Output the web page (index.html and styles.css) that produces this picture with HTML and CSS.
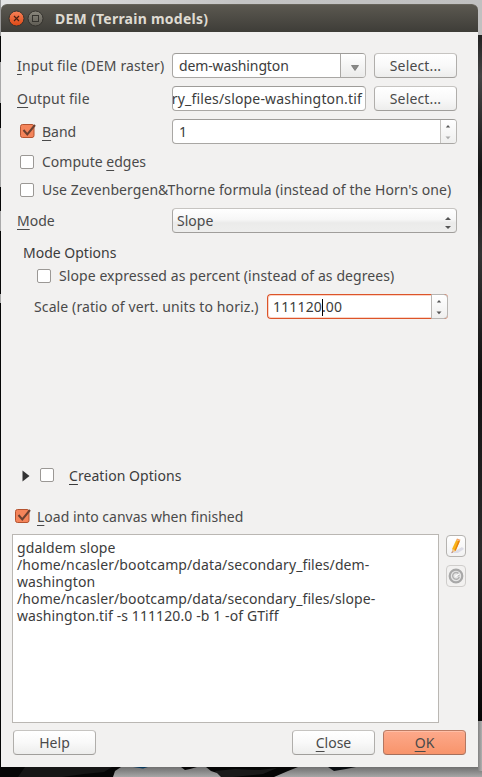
FILE: index.html
```html
<!DOCTYPE html>
<html lang="en">
<head>
<meta charset="utf-8">
<title>DEM (Terrain models)</title>
<link rel="stylesheet" href="styles.css">
</head>
<body>
<svg class="backdrop" width="482" height="777" viewBox="0 0 482 777" aria-hidden="true">
  <defs>
    <linearGradient id="sky" x1="0" x2="1" y1="0" y2="0"><stop offset="0" stop-color="#e4e4e4"/><stop offset=".5" stop-color="#c4c4c4"/><stop offset="1" stop-color="#c0c0c0"/></linearGradient>
    <linearGradient id="shore" gradientUnits="userSpaceOnUse" x1="0" x2="0" y1="767" y2="777"><stop offset="0" stop-color="#707070"/><stop offset="1" stop-color="#a6a6a6"/></linearGradient>
    <linearGradient id="edge" x1="0" x2="1" y1="0" y2="0"><stop offset="0" stop-color="#828282"/><stop offset="1" stop-color="#b0b0b0"/></linearGradient>
    <linearGradient id="strip" x1="0" x2="0" y1="0" y2="1"><stop offset="0" stop-color="#222"/><stop offset=".06" stop-color="#444"/><stop offset=".2" stop-color="#151515"/><stop offset=".32" stop-color="#333"/><stop offset=".5" stop-color="#111"/><stop offset=".75" stop-color="#2b2b2b"/><stop offset="1" stop-color="#050505"/></linearGradient>
  </defs>
  <rect width="482" height="777" fill="#060606"/>
  <rect width="482" height="35" fill="url(#sky)"/>
  <rect width="1" height="36" fill="#999"/>
  <path d="M0 62h1v41H0zM0 128h1v59H0zM0 211h1v20H0zM0 294h1v9H0z" fill="#a9a9a9"/>
  <rect x="478" y="35" width="4" height="686" fill="url(#strip)"/>
  <path d="M274 777l14-6 10-4h184v10z" fill="url(#shore)"/>
  <path d="M478 721h4v50h-4z" fill="url(#edge)"/>
  <path d="M328 767h28l-10 2-12 2z" fill="#0a0d10"/>
  <path d="M25 767h87l-8 5-20 2-22 3H18z" fill="#161616"/>
  <path d="M215 771l20-2 24 1 18-2-14 6-30 3h-12z" fill="#1a1a1a"/>
  <path d="M113 777l2-6 6-4h60l4 3 5-1 7-2h9l5 4 6 2 4 4z" fill="url(#shore)"/>
  <path d="M133 767h15l-5 1.500z" fill="#07375c"/>
</svg>

<main class="window">
  <header class="titlebar">
    <svg class="window-buttons" width="46" height="20" viewBox="0 0 46 20">
      <defs>
        <linearGradient id="closeFill" x1="0" x2="0" y1="0" y2="1"><stop offset="0" stop-color="#f78259"/><stop offset="1" stop-color="#dd4815"/></linearGradient>
        <linearGradient id="maxFill" x1="0" x2="0" y1="0" y2="1"><stop offset="0" stop-color="#8b887e"/><stop offset="1" stop-color="#5e5b53"/></linearGradient>
      </defs>
      <circle cx="15.500" cy="9.500" r="7.500" fill="url(#closeFill)" stroke="#34322d"/>
      <path d="M13 7l5 5M18 7l-5 5" stroke="#4a2012" stroke-width="1.200"/>
      <circle cx="34.500" cy="9.500" r="7.500" fill="url(#maxFill)" stroke="#34322d"/>
      <rect x="31.500" y="6.500" width="6" height="6" fill="none" stroke="#35332e"/>
    </svg>
    <h1 class="title">DEM (Terrain models)</h1>
  </header>

  <form class="content">
    <section class="fields">
      <div class="row">
        <label class="label t-input"><u>I</u>nput file (DEM raster)</label>
        <div class="combo">
          <span class="combo-text t-dem">dem-washington</span>
          <span class="combo-arrow"><svg width="8" height="6" viewBox="0 0 8 6"><path d="M.5.5h7L4 5.500z" fill="#8a8a88" stroke="#6a6a68" stroke-width=".7"/></svg></span>
        </div>
        <button type="button" class="button t-select">Select...</button>
      </div>
      <div class="row">
        <label class="label t-output"><u>O</u>utput file</label>
        <div class="entry clipped"><span class="t-path">ry_files/slope-washington.tif</span></div>
        <button type="button" class="button t-select">Select...</button>
      </div>
      <div class="row">
        <label class="label check-label"><svg class="checked" width="17" height="16" viewBox="0 0 17 16"><rect x=".5" y="1.500" width="13.500" height="13" rx="2" fill="#f4845a" stroke="#b4532f"/><path d="M3.500 7l3.800 4.500L15 2" fill="none" stroke="#6b4030" stroke-width="2"/></svg><span class="t-band"><u>B</u>and</span></label>
        <div class="spin">
          <span class="spin-text">1</span>
          <span class="stepper"><svg width="16" height="23" viewBox="0 0 16 23"><path d="M5.800 7.500h4.400L8 5z" fill="#555"/><path d="M5.500 16.500h5L8 19.300z" fill="#aaa"/></svg></span>
        </div>
      </div>
    </section>

    <div class="check-row"><span class="box"></span><span class="t-edges">Compute <u>e</u>dges</span></div>
    <div class="check-row"><span class="box"></span><span class="t-zev">Use Zevenbergen&amp;Thorne formula (instead of the Horn's one)</span></div>

    <div class="row mode-row">
      <label class="label t-mode"><u>M</u>ode</label>
      <div class="select"><span class="t-slope">Slope</span><svg width="8" height="14" viewBox="0 0 8 14"><path d="M1 4h6L4 1z" fill="#555"/><path d="M1 10h6L4 13z" fill="#555"/></svg></div>
    </div>

    <section class="mode-options">
      <h2 class="group-title t-modeopt">Mode Options</h2>
      <div class="option-row"><span class="box"></span><span class="t-percent">Slope expressed as percent (instead of as degrees)</span></div>
      <div class="scale-row">
        <label class="t-scale">Scale (ratio of vert. units to horiz.)</label>
        <div class="spin focused">
          <span class="spin-text t-num">111120<i class="caret"></i>.00</span>
          <span class="stepper"><svg width="16" height="23" viewBox="0 0 16 23"><path d="M5.800 7.500h4.400L8 5z" fill="#555"/><path d="M5.500 16.500h5L8 19.300z" fill="#555"/></svg></span>
        </div>
      </div>
    </section>

    <div class="creation-row">
      <svg width="8" height="12" viewBox="0 0 8 12"><path d="M.5.5L7.500 6 .5 11.500z" fill="#333"/></svg>
      <span class="box"></span>
      <h2 class="group-title t-creation"><u>C</u>reation Options</h2>
    </div>

    <div class="load-row"><svg class="checked" width="17" height="16" viewBox="0 0 17 16"><rect x=".5" y="1.500" width="13.500" height="13" rx="2" fill="#f4845a" stroke="#b4532f"/><path d="M3.500 7l3.800 4.500L15 2" fill="none" stroke="#6b4030" stroke-width="2"/></svg><span class="t-load"><u>L</u>oad into canvas when finished</span></div>

    <section class="command">
      <div class="command-text">gdaldem slope<br>/home/ncasler/bootcamp/data/secondary_files/dem-<br>washington<br>/home/ncasler/bootcamp/data/secondary_files/slope-<br>washington.tif -s 111120.0 -b 1 -of GTiff</div>
      <div class="tools">
        <span class="tool">
          <svg width="18" height="20" viewBox="0 0 18 20"><path d="M5 17l10-6 2 2-6 4z" fill="#dcdce6"/><path d="M9.200 4l3.600 1.300-4 9.200-3.300 1.800-.3-3.500z" fill="#f8b418"/><path d="M11.300 4.800l1.500.5-4 9.200-1.500.8z" fill="#e87f0c"/><path d="M9.200 4l.8-1.500 3.500 1.200-.7 1.600z" fill="#f0a062"/><path d="M5.200 12.800l2.800 1.600-3.200 2.600z" fill="#ecc9a0"/><path d="M5 15.400l1 .6-1.600 1.300z" fill="#84404a"/></svg>
        </span>
        <span class="tool disabled">
          <svg width="18" height="20" viewBox="0 0 18 20"><circle cx="9" cy="10" r="6.300" fill="#e6e6e6" stroke="#a8a8a8" stroke-width="2.200"/><path d="M12.500 9.500H9.800M11.500 7.500A3.400 3.400 0 1 0 12.300 11" fill="none" stroke="#b0b0b0" stroke-width="1.400"/><path d="M8.300 10.500l3.500-2.300" stroke="#fff" stroke-width="1.300"/></svg>
        </span>
      </div>
    </section>

    <footer class="actions">
      <button type="button" class="button t-help">Help</button>
      <span class="spacer"></span>
      <button type="button" class="button t-close"><u>C</u>lose</button>
      <button type="button" class="button primary t-ok"><u>O</u>K</button>
    </footer>
  </form>
</main>
</body>
</html>
```
FILE: styles.css
```css
* { box-sizing: border-box; }
html, body { margin: 0; height: 777px; overflow: hidden; }
body {
  display: flow-root;
  background: #060606;
  color: #4a4a4a;
  font: 14px/17px "Noto Sans", "Open Sans", sans-serif;
  white-space: nowrap;
}
svg { display: block; flex: none; }
.backdrop { position: absolute; top: 0; left: 0; z-index: -1; }
u { text-decoration: underline; text-decoration-thickness: 1px; text-underline-offset: 3px; text-decoration-skip-ink: none; }

.window { margin: 4px 4px 0 1px; height: 763px; width: 477px; background: #f2f1f0; border-radius: 6px 6px 0 0; display: flow-root; }
.titlebar {
  height: 28px;
  display: flex;
  align-items: center;
  border-radius: 6px 6px 0 0;
  background: linear-gradient(#5b5850, #3e3d38);
  border-top: 1px solid #67645b;
}
.title { margin: 0 0 0 8px; font-size: 14px; line-height: 18px; font-weight: 700; letter-spacing: .25px; color: #dfdbd2; }

.content { display: flex; flex-direction: column; padding: 21px 12px 12px 11px; height: 735px; }
.fields { display: flex; flex-direction: column; gap: 8px; margin-bottom: 3px; }
.row { display: flex; height: 25px; padding: 0 9px 0 5px; }
.label { width: 155px; line-height: 25px; flex: none; }
.check-label { display: flex; align-items: center; gap: 5px; padding-left: 3px; line-height: 23px; }
.check-label svg { margin-top: -1px; }

.combo, .entry, .spin { height: 25px; border: 1px solid; border-color: #9e9c99 #b8b6b3 #a9a7a4 #a9a7a4; border-radius: 4px; background: #fff; color: #3c3c3c; display: flex; }
.combo, .entry { width: 194px; margin-right: 8px; flex: none; }
.combo-text { flex: 1; padding-left: 6px; line-height: 23px; }
.combo-arrow { width: 25px; border-left: 1px solid #aaa8a5; border-radius: 0 3px 3px 0; background: linear-gradient(#fff, #ebebea); display: flex; align-items: center; justify-content: center; padding: 4px 0 0 3px; }
.clipped { overflow: hidden; justify-content: flex-end; padding-right: 3px; line-height: 23px; }
.spin { width: 285px; }
.spin-text { flex: 1; padding-left: 6px; line-height: 23px; }
.stepper { width: 16px; border-left: 1px solid #c4c2bf; background: linear-gradient(#fff, #efefee); border-radius: 0 3px 3px 0; }
.stepper svg { margin-left: -1px; }

.button {
  width: 83px; height: 25px; padding: 0; flex: none;
  font: inherit; line-height: 23px; color: #4a4a4a; text-align: center;
  border: 1px solid; border-color: #c6c4c1 #b0aeab #a09e9b;
  border-radius: 4px;
  background: linear-gradient(#fff, #f9f9f9 50%, #ededec);
}
.primary { background: linear-gradient(#fda98b, #f8946b); border-color: #bd7d65 #b27762 #a5705d; box-shadow: inset 0 1px #ffbea6; }

.box { width: 14px; height: 14px; flex: none; border: 1px solid #9b9895; border-radius: 2px; background: #fff; }
.check-row { display: flex; align-items: center; gap: 8px; height: 28px; padding-left: 8px; }
.check-row .box { margin-top: 1px; }
.mode-row { margin-top: 5px; }
.select { width: 285px; height: 25px; border: 1px solid; border-color: #c6c4c1 #b0aeab #a09e9b #a9a7a4; border-radius: 4px; background: linear-gradient(#fff, #f7f7f7 45%, #ebebea 60%, #eeeeed); display: flex; align-items: center; justify-content: space-between; padding: 0 4px; color: #4a4a4a; }
.select svg { margin-top: 4px; }

.mode-options { margin-top: 10px; height: 222px; padding-left: 11px; }
.group-title { margin: 0; font-size: 14px; line-height: 20px; font-weight: 400; color: #3c3c3c; }
.option-row { display: flex; align-items: center; gap: 8px; height: 24px; padding-left: 14px; }
.option-row .box { margin-top: 1px; }
.scale-row { display: flex; height: 25px; margin-top: 7px; padding-left: 11px; line-height: 25px; }
.scale-row label { width: 233px; }
.scale-row .spin { width: 181px; }
.focused { border-color: #dc5429; border-right-width: 0; box-shadow: inset 0 0 0 1px #fbd3c5; }
.focused .spin-text { padding-left: 5px; }
.focused .stepper { width: 17px; height: 25px; margin: -1px 0; border: 1px solid #b8b6b3; border-radius: 0 4px 4px 0; }
.caret { display: inline-block; width: 1px; height: 17px; margin-right: -1px; vertical-align: -4px; background: #000; }

.creation-row { display: flex; align-items: center; height: 20px; padding-left: 10px; }
.creation-row svg { margin-top: 1px; }
.creation-row .box { margin: 0 15px 0 10px; }
.creation-row .group-title { margin-top: 1px; }
.load-row { display: flex; align-items: center; gap: 5px; height: 20px; margin-top: 21px; padding-left: 3px; }
.command { display: flex; justify-content: space-between; height: 189px; margin-top: 8px; }
.command-text { width: 427px; border: 1px solid #bab7b3; background: #fff; color: #3c3c3c; padding: 4px; letter-spacing: .1px; }
.tools { display: flex; flex-direction: column; gap: 8px; padding-top: 1px; width: 20px; }
.tool { width: 20px; height: 22px; border: 1px solid #b5b3b0; border-radius: 4px; background: linear-gradient(#fff, #f2f2f2); }
.disabled { border-color: #cfcdcb; background: #f2f1f0; }
.actions { display: flex; gap: 8px; margin-top: 7px; padding-left: 1px; }
.spacer { flex: 1; }

.t-input { letter-spacing: .12px; }
.t-output { letter-spacing: .2px; }
.t-dem { letter-spacing: -.12px; }
.t-path { letter-spacing: .17px; }
.t-select { letter-spacing: .15px; }
.t-zev { letter-spacing: .07px; }
.t-percent { letter-spacing: .08px; }
.t-scale { letter-spacing: .11px; }
.t-creation { letter-spacing: .06px; }
.t-num { letter-spacing: .15px; }
```
